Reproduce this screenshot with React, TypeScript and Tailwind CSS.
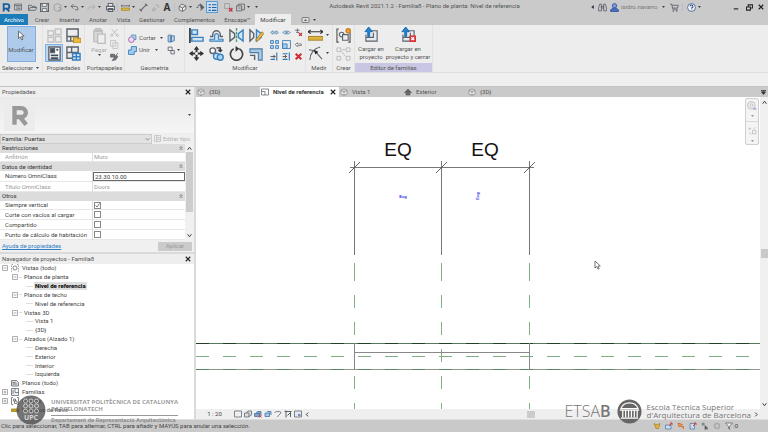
import type { ReactNode } from "react";

type Drawing = { children: ReactNode; className?: string; box?: string };

function Icon({ children, className = "size-2.5", box = "0 0 16 16" }: Drawing) {
  return (
    <svg viewBox={box} className={`shrink-0 ${className}`} fill="none" stroke="#5c636b" strokeWidth="1.5" aria-hidden="true">
      {children}
    </svg>
  );
}

function Caret({ className = "" }: { className?: string }) {
  return (
    <span className={`flex w-[5px] shrink-0 justify-center ${className}`}>
      <svg viewBox="0 0 6 4" className="h-[2px] w-[3px]" aria-hidden="true">
        <path d="M0 0h6L3 4z" fill="#444" />
      </svg>
    </span>
  );
}

function Tool({ label, children, className = "" }: { label: string; children: ReactNode; className?: string }) {
  return (
    <button aria-label={label} className={`flex shrink-0 items-center justify-center ${className}`}>
      {children}
    </button>
  );
}

function Cross({ className = "size-[6px]" }: { className?: string }) {
  return (
    <svg viewBox="0 0 8 8" className={className} stroke="#222" strokeWidth="1.5" aria-hidden="true">
      <path d="M1 1l6 6M7 1L1 7" />
    </svg>
  );
}

/* ---------- Quick access bar ---------- */

const quick = "h-[13px] w-[12px]";
const divider = <span className="mx-px h-[9px] w-px shrink-0 bg-[#c0c0c0]" />;

function QuickAccess() {
  return (
    <div className="flex shrink-0 items-center">
      <Tool label="Revit" className={quick}>
        <Icon className="size-[9px]">
          <path d="M3 15V2h6a4 4 0 0 1 0 8H3M8 10l5 5" stroke="#1c5f9e" strokeWidth="3.4" />
        </Icon>
      </Tool>
      <Tool label="Inicio" className={quick}>
        <Icon className="size-2"><path d="M1 2h14v12H1zM1 5h14M6 5v9M8 8h5M8 11h5" /></Icon>
      </Tool>
      <span className="w-[2px]" />
      <Tool label="Abrir" className={quick}>
        <Icon className="size-[9px]"><path d="M1 13V4h5l1 2h6v2M1 13l3-5h12l-3 5z" /></Icon>
      </Tool>
      <Tool label="Guardar" className={quick}>
        <Icon className="size-[9px]"><path d="M1 1h14v14H1z" strokeWidth="2" /><path d="M4 1h8v5H4zM4 10h8v5H4z" fill="#f3f3f3" /></Icon>
      </Tool>
      <span className="w-px" />
      <Tool label="Sincronizar" className={quick}>
        <Icon className="size-[9px]"><path d="M2 4l6-3 6 3v8l-6 3-6-3zM9 9a3 3 0 1 1 0 4" stroke="#999" /></Icon>
      </Tool>
      <Caret />
      <Tool label="Deshacer" className={quick}>
        <Icon className="size-[9px]"><path d="M6 2L2 6l4 4M2 6h8a4 4 0 0 1 4 4v2H9" /></Icon>
      </Tool>
      <Caret />
      <Tool label="Rehacer" className={quick}>
        <Icon className="size-[9px]"><path d="M10 3l4 4-4 4M14 7H6a4 4 0 0 0-4 5" stroke="#a9a9a9" /></Icon>
      </Tool>
      <Caret />
      <span className="w-[2px]" />
      <Tool label="Imprimir" className={quick}>
        <Icon className="size-[9px]"><path d="M4 6V1h8v5M1 6h14v6H1zM4 10h8v5H4z" fill="#eee" strokeWidth="1.8" /></Icon>
      </Tool>
      {divider}
      <Tool label="Medir" className={quick}>
        <Icon className="size-[9px]"><path d="M1 3v4M15 3v4M1 5h14" /><path d="M1 9h14v4H1z" fill="#e2bd45" stroke="#a8882a" /></Icon>
      </Tool>
      <Caret />
      <span className="w-px" />
      <Tool label="Cota alineada" className={quick}>
        <Icon className="size-[9px]"><path d="M3 13L13 3M1 11l4 4M11 1l4 4" strokeWidth="2" /></Icon>
      </Tool>
      <Tool label="Etiqueta" className={quick}>
        <Icon className="size-[9px]"><path d="M2 14l3-6 4 4zM8 5a3 3 0 1 1 4 4" stroke="#a5a5a5" /></Icon>
      </Tool>
      <Tool label="Texto" className={quick}>
        <span className="font-['Open_Sans',sans-serif] text-[10px] leading-[13px] font-bold text-[#333]">A</span>
      </Tool>
      {divider}
      <Tool label="Vista 3D" className={quick}>
        <Icon className="size-[9px]"><path d="M2 6l5-4 7 3v6l-6 4-6-3zM2 6l6 3 6-4M8 9v6" fill="#eee" /></Icon>
      </Tool>
      <Caret />
      <span className="w-px" />
      <Tool label="Sección" className={quick}>
        <Icon className="size-[9px]"><path d="M3 6l5-4 5 6-5 5M1 8h3" strokeWidth="1.8" /><path d="M8 2l6 6-5 2z" fill="#555" /></Icon>
      </Tool>
      <Tool label="Líneas finas" className="h-[12px] w-[12px] border border-[#5d9bd6] bg-[#c6def3]">
        <Icon className="size-[9px]"><path d="M1 3h4M7 3h8M1 8h4M7 8h8M1 13h4M7 13h8" stroke="#2d5f91" strokeWidth="2" /></Icon>
      </Tool>
      <span className="w-[4px]" />
      <Tool label="Cerrar inactivas" className={quick}>
        <Icon className="size-[9px]"><path d="M1 1h9v9H1z" stroke="#9b9b9b" /><path d="M9 9l6 6M15 9l-6 6" stroke="#c4333a" strokeWidth="2.4" /></Icon>
      </Tool>
      <Tool label="Cambiar ventanas" className={quick}>
        <Icon className="size-[9px]"><path d="M1 5h9v9H1zM4 5V2h11v10h-5M4 9h4" /></Icon>
      </Tool>
      <Caret />
      <span className="w-[3px]" />
      <Caret />
    </div>
  );
}

function TitleBar() {
  return (
    <div className="flex h-[14px] shrink-0 items-center">
      <QuickAccess />
      <div className="min-w-0 flex-1 truncate pb-[2px] text-center text-[#555]">
        Autodesk Revit 2021.1.2 - Familia8 - Plano de planta: Nivel de referencia
      </div>
      <div className="flex w-[178px] shrink-0 items-center">
        <Tool label="Mostrar búsqueda" className="w-[4px]">
          <Icon box="0 0 4 6" className="h-[4px] w-[3px]"><path d="M4 0v6L0 3z" fill="#333" stroke="none" /></Icon>
        </Tool>
        <Tool label="Buscar" className="ml-[2px] h-[13px] w-[12px]">
          <Icon className="size-[9px]"><path d="M1 9l2-7h3v12H1zM10 2h3l2 7v5h-5zM6 6h4v3H6z" /></Icon>
        </Tool>
        <Tool label="Cuenta" className="h-[13px] w-[12px]">
          <Icon className="size-[9px]"><circle cx="8" cy="5" r="4" fill="#7e9ad6" stroke="#3455a4" /><path d="M1 15v-3l5-3h4l5 3v3z" fill="#4b6cb8" stroke="#3455a4" /></Icon>
        </Tool>
        <span className="ml-px w-[40px] text-[#777]">isidro.navarro</span>
        <Caret />
        <Tool label="Tienda" className="ml-[2px] h-[13px] w-[12px]">
          <Icon className="size-[9px]"><path d="M0 2h3l2 9h9M4 4h11l-2 5H5" /><circle cx="6" cy="14" r="1" /><circle cx="12" cy="14" r="1" /></Icon>
        </Tool>
        <span className="mx-[2px] h-[8px] w-px bg-[#bbb]" />
        <Tool label="Ayuda" className="h-[13px] w-[12px]">
          <Icon className="size-[9px]"><circle cx="8" cy="8" r="7" fill="#f2f5fa" stroke="#3f5f92" /><path d="M5.500 6a2.500 2.500 0 1 1 3 2.500V10M8.500 11.500v1.500" stroke="#2c4a86" strokeWidth="1.800" /></Icon>
        </Tool>
        <Caret />
        <span className="flex-1" />
        <Tool label="Minimizar" className="w-[10px]">
          <Icon className="size-[6px]"><path d="M2 13h12" stroke="#222" strokeWidth="3" /></Icon>
        </Tool>
        <Tool label="Restaurar" className="ml-[2px] w-[12px]">
          <Icon className="size-[7px]"><path d="M1 7h9v7H1zM5 6V2h10v7h-4" stroke="#222" strokeWidth="2.400" /></Icon>
        </Tool>
        <Tool label="Cerrar" className="mr-px w-[12px]"><Cross /></Tool>
      </div>
    </div>
  );
}

function RibbonTabs() {
  const tabs = [
    ["Crear", "w-[26px]"],
    ["Insertar", "w-[29px]"],
    ["Anotar", "w-[28px]"],
    ["Vista", "w-[23px]"],
    ["Gestionar", "w-[34px]"],
    ["Complementos", "w-[51px]"],
    ["Enscape™", "w-[35px]"],
  ];
  return (
    <div className="flex h-[11px] shrink-0 items-stretch text-[#555]">
      <button className="mr-px w-[28px] bg-[#1c7cba] text-white">Archivo</button>
      {tabs.map(([name, width]) => (
        <button key={name} className={`shrink-0 ${width}`}>{name}</button>
      ))}
      <button className="w-[36px] shrink-0 bg-[#ededed] text-[#444]">Modificar</button>
      <button aria-label="Minimizar cinta" className="ml-[10px] flex items-center gap-[2px]">
        <Icon box="0 0 16 12" className="h-[6px] w-[9px]"><rect x="1" y="1" width="14" height="10" rx="2" fill="#ddd" /><path d="M5 8h6L8 4z" fill="#555" stroke="none" /></Icon>
        <Caret />
      </button>
    </div>
  );
}

/* ---------- Ribbon ---------- */

function Panel({ title, width, children, accent = false }: { title: ReactNode; width: string; children: ReactNode; accent?: boolean }) {
  return (
    <section className={`flex shrink-0 flex-col border-r border-[#e2e2e2] ${width}`}>
      <div className="flex min-h-0 flex-1 items-center justify-center">{children}</div>
      <div className={`flex h-[9px] items-center justify-center whitespace-nowrap ${accent ? "bg-[#c8c6e2]" : ""}`}>{title}</div>
    </section>
  );
}

const big = "size-[15px]";
const small = "size-[9px]";

function Ribbon() {
  return (
    <div className="flex h-[48px] shrink-0 border-b border-[#dedede] bg-[#ededed] text-[#555]">
      <Panel width="w-[43px]" title={<>Seleccionar <Caret className="ml-[2px]" /></>}>
        <button className="flex h-[36px] w-[29px] flex-col items-center justify-between border border-[#82ade0] bg-[#aecbeb] pt-[3px] pb-[7px]">
          <Icon className="h-[11px] w-[10px]"><path d="M4 1v12l3-3 2 5 2-1-2-5h4z" fill="#fff" stroke="#666" /></Icon>
          <span>Modificar</span>
        </button>
      </Panel>

      <Panel width="w-[42px]" title="Propiedades">
        <div className="grid grid-cols-2 gap-x-px">
          <Tool label="Propiedades de tipo" className="size-[18px]">
            <Icon className={big}><path d="M1 3h6v5H1zM9 1h6v6H9zM1 10h6v5H1zM9 9h6v6H9z" stroke="#c3c3c3" /></Icon>
          </Tool>
          <Tool label="Categoría y parámetros de familia" className="size-[18px]">
            <Icon className={big}><path d="M1 1h12v13H1zM1 9h12M5 9v5" /><path d="M8 10h3l1 1h4v5H8z" fill="#efb93c" stroke="#b98720" strokeWidth="1" /></Icon>
          </Tool>
          <Tool label="Propiedades" className="size-[18px] border border-[#7fb0e2] bg-[#bcd7f2]">
            <Icon className={big}><path d="M2 1h12v14H2z" fill="#fff" /><path d="M4 3h4v4H4z" fill="#33424f" /><path d="M10 4h2M4 10h8M4 13h8" strokeWidth="2" stroke="#3c4f63" /></Icon>
          </Tool>
          <Tool label="Tipos de familia" className="size-[18px]">
            <Icon className={big}><path d="M1 1h12v12H1zM1 7h12M6 1v6" /><path d="M7 8h8v7H7zM7 11.500h8M11 8v7" fill="#d6eafb" stroke="#3a7fc0" /></Icon>
          </Tool>
        </div>
      </Panel>

      <Panel width="w-[40px]" title="Portapapeles">
        <div className="flex w-full pl-[3px]">
          <button className="flex w-[22px] flex-col items-center text-[#aaa]">
            <Icon className="h-[16px] w-[15px]"><path d="M2 2h9v12H2zM4 0h5v3H4z" fill="#d8d8d8" stroke="#bdbdbd" /><path d="M6 6h8v10H6z" fill="#eee" stroke="#bdbdbd" /></Icon>
            <span className="mt-[2px]">Pegar</span>
            <Caret />
          </button>
          <div className="flex flex-col gap-[3px]">
            <Tool label="Cortar al portapapeles"><Icon className={small}><path d="M3 2l9 10M13 2L4 12" stroke="#b8b8b8" /><circle cx="3" cy="13" r="2" stroke="#b8b8b8" /><circle cx="13" cy="13" r="2" stroke="#b8b8b8" /></Icon></Tool>
            <Tool label="Copiar al portapapeles"><Icon className={small}><path d="M1 1h9v10H1zM5 5h9v10H5z" fill="#eee" stroke="#c0c0c0" /></Icon></Tool>
            <Tool label="Igualar propiedades"><Icon className={small}><path d="M1 4h7v5H1zM8 9l6-7M4 15l6-1 4-6-3-2z" fill="#777" /></Icon></Tool>
          </div>
        </div>
      </Panel>

      <Panel width="w-[60px]" title="Geometría">
        <div className="flex w-full flex-col gap-[3px] pl-[3px]">
          <div className="flex h-[9px] items-center">
            <Icon className={small}><path d="M5 2h9v8h-4" fill="#b9dcf6" stroke="#3d83bd" /><circle cx="6" cy="10" r="5" fill="#eedcf4" stroke="#8d58a5" /></Icon>
            <button className="ml-[2px] flex w-[25px] items-center justify-between">Cortar<Caret /></button>
            <Tool label="Remate" className="ml-[3px]"><Icon className={small}><path d="M2 2h6v12H2zM6 4l7-1v9l-7 2z" fill="#b9d8f2" stroke="#46739e" /></Icon></Tool>
          </div>
          <div className="flex h-[9px] items-center">
            <Icon className={small}><path d="M6 1h9v9h-4v5H1V7h5z" fill="#9fcdf0" stroke="#3478b5" /></Icon>
            <button className="ml-[2px] flex w-[20px] items-center justify-between">Unir<Caret /></button>
            <Tool label="División de cara" className="ml-[8px]"><Icon className={small}><path d="M2 2h7v6H2zM7 8h6v6H7z" fill="#eee" /></Icon></Tool>
            <Caret />
          </div>
        </div>
      </Panel>

      <Panel width="w-[121px]" title="Modificar">
        <div className="grid grid-cols-4 gap-x-[3px] gap-y-[1px]">
          <Tool label="Alinear" className="size-[17px]"><Icon className={big}><path d="M1 0v16" stroke="#333" strokeWidth="1.800" /><path d="M3 2h6v5H3zM3 10h12v4H3z" fill="#cfe6f8" stroke="#3c82bf" /></Icon></Tool>
          <Tool label="Desfase" className="size-[17px]"><Icon className={big}><path d="M1 9h3V7a4 4 0 1 1 8 0v2h3" /><path d="M1 14h14v-2h-5V8a2 2 0 1 0-4 0v4H1z" fill="#cfe6f8" stroke="#3c82bf" strokeWidth="1.200" /></Icon></Tool>
          <Tool label="Simetría: eje" className="size-[17px]"><Icon className={big}><path d="M1 2v12l5-4V6z" /><path d="M15 2v12l-5-4V6z" fill="#cfe6f8" stroke="#3c82bf" /><path d="M8 0v16" stroke="#4aa07a" strokeDasharray="3 1" /></Icon></Tool>
          <Tool label="Simetría: dibujar eje" className="size-[17px]"><Icon className={big}><path d="M1 2v12l4-4V6z" /><path d="M8 2v12l5-4V6z" fill="#cfe6f8" stroke="#3c82bf" /><path d="M7 13l7-9 2 2-7 8z" fill="#efbd4e" stroke="#a77f2d" strokeWidth="1" /></Icon></Tool>
          <Tool label="Mover" className="size-[17px]"><Icon className={big}><path d="M8 2v12M2 8h12" stroke="#333" strokeWidth="2" /><path d="M8 0l3 4H5zM8 16l3-4H5zM0 8l4-3v6zM16 8l-4-3v6z" fill="#333" stroke="none" /><circle cx="8" cy="8" r="1.500" fill="#fff" stroke="none" /></Icon></Tool>
          <Tool label="Copiar" className="size-[17px]"><Icon className={big}><circle cx="4" cy="5" r="3" fill="#fff" /><path d="M8 2h4v3M10 4l2 2 2-2" stroke="#333" /><circle cx="8" cy="11" r="3.200" fill="#cfe6f8" stroke="#3c82bf" /><circle cx="12" cy="12" r="3.200" fill="#a8d2f4" stroke="#3c82bf" /></Icon></Tool>
          <Tool label="Rotar" className="size-[17px]"><Icon className={big}><path d="M5 3a6.500 6.500 0 1 0 6 0" stroke="#444" strokeWidth="1.800" /><path d="M7 0v6l4-3z" fill="#333" stroke="none" /></Icon></Tool>
          <Tool label="Recortar en esquina" className="size-[17px]"><Icon className={big}><path d="M1 3h13v12h-4V7H1z" fill="#a9c9e4" stroke="#4d7fa9" strokeWidth="1.200" /><path d="M1 10h5v5" /></Icon></Tool>
        </div>
        <div className="ml-[5px] grid grid-cols-3 gap-[3px]">
          <Tool label="Dividir elemento"><Icon className={small}><path d="M1 8l4-3v2h6V5l4 3-4 3V9H5v2z" stroke="#5c88b0" fill="#d5e6f4" /></Icon></Tool>
          <Tool label="Dividir con separación"><Icon className={small}><path d="M1 8l5-3v6zM15 8l-5-3v6zM8 5v6" stroke="#6a90b4" /></Icon></Tool>
          <Tool label="Desbloquear"><Icon className={small}><path d="M2 4h8M6 1v6M4 8h5" /><path d="M9 9l5 5M14 9l-5 5" stroke="#c93034" strokeWidth="2.400" /></Icon></Tool>
          <Tool label="Matriz"><Icon className={small}><path d="M1 1h5v5H1zM10 1h5v5h-5zM1 10h5v5H1zM10 10h5v5h-5z" fill="#b9dcf6" stroke="#3478b5" /></Icon></Tool>
          <Tool label="Escala"><Icon className={small}><path d="M1 1h14v14H1z" stroke="#3478b5" /><path d="M1 7h8v8H1z" fill="#9fcdf0" stroke="#3478b5" /></Icon></Tool>
          <Tool label="Bloquear"><Icon className={small}><path d="M2 8l4-3v2h7v3H6v2z" stroke="#777" /></Icon></Tool>
          <Tool label="Recortar un elemento"><Icon className={small}><path d="M1 8h8M6 5l3 3-3 3" stroke="#444" /><path d="M12 1v14M1 13h8" stroke="#3478b5" strokeWidth="2" /></Icon></Tool>
          <Tool label="Recortar varios elementos"><Icon className={small}><path d="M1 8h7M5 5l3 3-3 3" stroke="#444" /><path d="M1 3h9M1 13h9M13 1v14" stroke="#3478b5" strokeWidth="2" /></Icon></Tool>
          <Tool label="Borrar"><Icon className={small}><path d="M3 3l10 10M13 3L3 13" stroke="#cf2c33" strokeWidth="3.600" /></Icon></Tool>
        </div>
      </Panel>

      <Panel width="w-[27px]" title="Medir">
        <div className="flex flex-col gap-[3px]">
          <button aria-label="Medir distancia" className="flex items-center gap-[2px]">
            <Icon className={big}><path d="M0 4h16M3 2L0 4l3 2M13 2l3 2-3 2" stroke="#333" strokeWidth="1.200" /><path d="M0 9h16v4H0z" fill="#dfb23e" stroke="#a4812f" strokeWidth="1" /></Icon>
            <Caret />
          </button>
          <button aria-label="Cota" className="flex items-center gap-[2px]">
            <Icon className={big}><path d="M2 15A14 14 0 0 1 13 1M1 4l6 1 8 9" strokeWidth="1.200" /><path d="M6 4l5 2-3 3z" fill="#222" stroke="none" /></Icon>
            <Caret />
          </button>
        </div>
      </Panel>

      <Panel width="w-[22px]" title="Crear">
        <div className="flex flex-col gap-[3px]">
          <Tool label="Crear grupo"><Icon className={big}><path d="M3 1H1v14h2M13 5h2v10h-2" stroke="#555" strokeWidth="1.200" /><circle cx="6" cy="7" r="2.500" strokeWidth="1.200" /><path d="M7 7h6v6H7z" fill="#eee" strokeWidth="1.200" /><circle cx="13" cy="3" r="2.200" fill="#f4a83a" stroke="#cf7d20" /></Icon></Tool>
          <Tool label="Crear similar"><Icon className={big}><path d="M1 2h4v4H1zM11 2h4v4h-4zM1 11h4v4H1zM11 11h4v4h-4zM6 4h4M6 6l4 5" stroke="#bbb" strokeWidth="1" /></Icon></Tool>
        </div>
      </Panel>

      <Panel width="w-[78px]" title="Editor de familias" accent>
        <div className="flex w-full justify-between pr-px pl-[2px] leading-[8px]">
          <button className="flex w-[28px] flex-col items-center whitespace-nowrap">
            <Icon className={big}><path d="M7 4h7v11H2V8M10 6v5H2" fill="#e4eaf0" strokeWidth="1.200" /><path d="M4 10V5H1l4-5 4 5H6v5z" fill="#2582cf" stroke="#196ab0" strokeWidth="1" /></Icon>
            <span className="mt-[3px]">Cargar en<br />proyecto</span>
          </button>
          <button className="flex w-[46px] flex-col items-center whitespace-nowrap">
            <Icon className={big}><path d="M7 4h7v11H2V8M10 6v5H2" fill="#e4eaf0" strokeWidth="1.200" /><path d="M4 10V5H1l4-5 4 5H6v5z" fill="#2582cf" stroke="#196ab0" strokeWidth="1" /><path d="M9 9h7v7H9z" fill="#d8343a" stroke="none" /><path d="M11 11l3 3M14 11l-3 3" stroke="#fff" /></Icon>
            <span className="mt-[3px]">Cargar en<br />proyecto y cerrar</span>
          </button>
        </div>
      </Panel>
    </div>
  );
}

/* ---------- Properties ---------- */

type Row = { kind: "group" | "text" | "input" | "check"; name: string; value?: string; on?: boolean };

const rows: Row[] = [
  { kind: "group", name: "Restricciones" },
  { kind: "text", name: "Anfitrión", value: "Muro" },
  { kind: "group", name: "Datos de identidad" },
  { kind: "input", name: "Número OmniClass", value: "23.30.10.00" },
  { kind: "text", name: "Título OmniClass", value: "Doors" },
  { kind: "group", name: "Otros" },
  { kind: "check", name: "Siempre vertical", on: true },
  { kind: "check", name: "Corte con vacíos al cargar" },
  { kind: "check", name: "Compartido" },
  { kind: "check", name: "Punto de cálculo de habitación" },
];

function PaneTitle({ children }: { children: ReactNode }) {
  return (
    <div className="flex h-[10px] shrink-0 items-center justify-between bg-[#eee] pr-[3px] pl-[2px] text-[#555]">
      <h2>{children}</h2>
      <button aria-label="Cerrar panel"><Cross /></button>
    </div>
  );
}

function Value({ row }: { row: Row }) {
  if (row.kind === "input")
    return <input id={row.name} defaultValue={row.value} className="block h-[9px] w-full border border-[#666] bg-white px-px leading-[7px] outline-none" />;
  if (row.kind === "check")
    return (
      <span className="relative ml-px flex size-[7px]">
        <input id={row.name} type="checkbox" defaultChecked={row.on} className="peer size-[7px] appearance-none border border-[#888] bg-white" />
        <svg viewBox="0 0 7 7" className="pointer-events-none absolute inset-0 hidden size-[7px] peer-checked:block" fill="none" stroke="#555" strokeWidth="0.8" aria-hidden="true">
          <path d="M1.500 3.500L3 5l2.500-3.500" />
        </svg>
      </span>
    );
  return <span className="pl-px">{row.value}</span>;
}

function Properties() {
  return (
    <section className="flex shrink-0 flex-col">
      <PaneTitle>Propiedades</PaneTitle>
      <div className="flex h-[36px] items-center justify-between bg-linear-to-b from-[#eaeaea] to-[#f5f5f5] pr-[2px] pl-[4px]">
        <span className="flex h-[31px] w-[31px] items-center justify-center bg-[#ececec]">
          <Icon className="size-[22px]"><path d="M4 15V3h5a3 3 0 0 1 0 6.500H4M8 9.500l4.500 5.500" stroke="#999" strokeWidth="3.200" /></Icon>
        </span>
        <button aria-label="Selector de tipo"><Caret /></button>
      </div>
      <div className="flex h-[11px] items-center bg-[#efefef]">
        <div className="relative w-[152px]">
          <select aria-label="Familia" className="block h-[10px] w-full appearance-none border border-[#ccc] bg-[#e2e2e2] pl-px text-[#333] outline-none">
            <option>Familia: Puertas</option>
          </select>
          <svg viewBox="0 0 8 8" className="pointer-events-none absolute top-[3px] right-[2px] size-[5px]" fill="none" stroke="#555" aria-hidden="true"><path d="M1 2l3 3 3-3" /></svg>
        </div>
        <button disabled className="ml-[2px] flex flex-1 items-center gap-[2px] whitespace-nowrap text-[#b2b2b2]">
          <Icon className="size-[7px]"><path d="M1 1h14v14H1zM6 1v14M6 6h9M6 10h9" stroke="#b5b5b5" /></Icon>
          Editar tipo
        </button>
      </div>
      <div className="flex h-[96px] bg-white">
        <table className="h-full min-w-0 flex-1 table-fixed border-collapse text-[#444]">
          <colgroup><col className="w-1/2" /><col className="w-1/2" /></colgroup>
          <tbody>
            {rows.map((row) =>
              row.kind === "group" ? (
                <tr key={row.name} className="bg-[#dcdcdc] text-[#333]">
                  <th scope="rowgroup" colSpan={2} className="p-0 pl-[2px] text-left font-normal">
                    <div className="flex items-center justify-between pr-[2px]">
                      {row.name}
                      <svg viewBox="0 0 6 8" className="h-[5px] w-[4px]" fill="none" stroke="#333" aria-hidden="true"><path d="M1 3l2-2 2 2M1 6l2-2 2 2" /></svg>
                    </div>
                  </th>
                </tr>
              ) : (
                <tr key={row.name} className={`border-b border-[#e8e8e8] ${row.kind === "text" ? "text-[#999]" : ""}`}>
                  <th scope="row" className="p-0 pl-[5px] text-left font-normal whitespace-nowrap"><label htmlFor={row.name}>{row.name}</label></th>
                  <td className="border-l border-[#ddd] p-0"><Value row={row} /></td>
                </tr>
              ),
            )}
          </tbody>
        </table>
        <div className="flex w-[9px] flex-col items-center justify-between bg-[#f0f0f0] py-[2px]">
          <Icon box="0 0 8 8" className="size-[5px]"><path d="M1 6l3-4 3 4" stroke="#333" /></Icon>
          <span className="mt-[1px] mb-auto h-[60px] w-[7px] bg-[#cdcdcd]" />
          <Icon box="0 0 8 8" className="size-[5px]"><path d="M1 2l3 4 3-4" stroke="#333" /></Icon>
        </div>
      </div>
      <div className="flex h-[12px] items-center justify-between bg-[#f0f0f0] pr-[2px] pl-[2px]">
        <a href="#ayuda" className="text-[#2f7fc6] underline">Ayuda de propiedades</a>
        <button disabled className="h-[9px] w-[34px] bg-[#cbcbcb] text-[#9a9a9a]">Aplicar</button>
      </div>
    </section>
  );
}

/* ---------- Project browser ---------- */

type Node = { depth: 0 | 1 | 2; name: string; toggle?: "-" | "+"; icon?: "views" | "sheet" | "family" | "group" | "link"; current?: boolean };

const tree: Node[] = [
  { depth: 0, name: "Vistas (todo)", toggle: "-", icon: "views" },
  { depth: 1, name: "Planos de planta", toggle: "-" },
  { depth: 2, name: "Nivel de referencia", current: true },
  { depth: 1, name: "Planos de techo", toggle: "-" },
  { depth: 2, name: "Nivel de referencia" },
  { depth: 1, name: "Vistas 3D", toggle: "-" },
  { depth: 2, name: "Vista 1" },
  { depth: 2, name: "{3D}" },
  { depth: 1, name: "Alzados (Alzado 1)", toggle: "-" },
  { depth: 2, name: "Derecha" },
  { depth: 2, name: "Exterior" },
  { depth: 2, name: "Interior" },
  { depth: 2, name: "Izquierda" },
  { depth: 0, name: "Planos (todo)", icon: "sheet" },
  { depth: 0, name: "Familias", toggle: "+", icon: "family" },
  { depth: 0, name: "Grupos", toggle: "+", icon: "group" },
  { depth: 0, name: "Vínculos de Revit", icon: "link" },
];

const indent = ["pl-[2px]", "pl-[12px]", "pl-[26px]"];

const nodeIcons = {
  views: <><path d="M4 1H1v14h3M12 1h3v14h-3" stroke="#888" strokeDasharray="3 2" /><circle cx="8" cy="8" r="4" /></>,
  sheet: <path d="M1 3h10l4 4v7H1zM3 7h6M3 10h9" fill="#ddd" />,
  family: <path d="M1 1h14v14H1zM8 1v8h7M4 4v8" fill="#eee" />,
  group: <path d="M4 1H1v14h3M12 1h3v14h-3M5 4h4v4H5zM7 8h5v5H7z" />,
  link: <path d="M1 6h14v5H1z" fill="#c9a227" stroke="#9a7a14" />,
};

function Browser() {
  return (
    <section className="flex min-h-0 flex-1 flex-col border-t-2 border-[#dadada]">
      <PaneTitle>Navegador de proyectos - Familia8</PaneTitle>
      <ul className="flex h-[150px] flex-col bg-white text-[#444]">
        {tree.map((node, i) => (
          <li key={i} className={`flex min-h-0 flex-1 items-center ${indent[node.depth]}`}>
            {node.depth < 2 && (
              <svg viewBox="0 0 6 6" className="size-[6px] shrink-0" fill="none" stroke="#999" strokeWidth="0.8" aria-hidden="true">
                {node.toggle && <path d={node.toggle === "+" ? "M.5.5h5v5h-5zM1.500 3h3M3 1.500v3" : "M.5.5h5v5h-5zM1.500 3h3"} />}
              </svg>
            )}
            {node.icon ? (
              <Icon className="mr-px ml-[3px] size-2">{nodeIcons[node.icon]}</Icon>
            ) : (
              <span className={`h-px shrink-0 bg-[#ddd] ${node.depth === 2 ? "w-[7px]" : "ml-px w-[3px]"}`} />
            )}
            <button className={`ml-px px-px whitespace-nowrap ${node.current ? "bg-[#dedede] font-bold text-black" : ""}`}>{node.name}</button>
          </li>
        ))}
      </ul>
      <div className="flex-1 bg-white" />
    </section>
  );
}

/* ---------- Drawing area ---------- */

function ViewTabs() {
  const plan = <path d="M1 2h14v12H1zM1 7h7v7" fill="#fff" />;
  const cube = <path d="M2 5l6-3 6 3v7l-6 3-6-3zM2 5l6 3 6-3M8 8v7" fill="#eee" stroke="#777" strokeWidth="1.200" />;
  const house = <path d="M1 9l7-7 7 7h-3v5H4V9z" fill="#666" />;
  const views = [
    { name: "{3D}", icon: cube },
    { name: "Nivel de referencia", icon: plan, current: true },
    { name: "Vista 1", icon: cube },
    { name: "Exterior", icon: house },
    { name: "{3D}", icon: cube },
  ];
  return (
    <div className="flex h-[10px] shrink-0 items-center bg-[#cacaca] text-[#555]">
      {views.map((view, i) => (
        <button key={i} className={`flex h-full shrink-0 items-center gap-[4px] pl-px whitespace-nowrap ${view.current ? "w-[79px] bg-white font-bold text-[#333]" : "w-[64px]"}`}>
          <Icon className="size-2">{view.icon}</Icon>
          {view.name}
          {view.current && <Cross className="mr-[3px] ml-auto size-[6px]" />}
        </button>
      ))}
      <button aria-label="Lista de vistas" className="mr-[2px] ml-auto">
        <Icon box="0 0 8 8" className="size-[5px]"><path d="M0 1h8M1 3h6L4 7z" fill="#333" stroke="#333" /></Icon>
      </button>
    </div>
  );
}

function Canvas() {
  const axes = [158, 245, 333];
  return (
    <svg className="min-w-0 flex-1 self-stretch bg-white" fill="none" role="img" aria-label="Plano de planta: Nivel de referencia">
      <g stroke="#777" shapeRendering="crispEdges">
        <path d="M154 70.500h184" />
        {axes.map((x) => <path key={x} d={`M${x + 0.5} 64V158`} />)}
      </g>
      <g stroke="#555" strokeWidth="0.9">
        {axes.map((x) => <path key={x} d={`M${x - 5} 76L${x + 6} 65`} />)}
      </g>
      <g stroke="#7fb082" shapeRendering="crispEdges">
        {axes.map((x) => <path key={x} d={`M${x + 0.5} 166v18m0 14v13m0 14v13m0 41v13m0 14v7`} />)}
        <path d="M245.500 252v13" />
        <line x1="0" x2="100%" y1="246.500" y2="246.500" stroke="#55795a" />
        <line x1="0" x2="100%" y1="246.500" y2="246.500" stroke="#263d29" strokeDasharray="13 14" />
        <line x1="0" x2="100%" y1="272.500" y2="272.500" stroke="#8c9a8d" />
        <line x1="0" x2="100%" y1="272.500" y2="272.500" stroke="#5b8660" strokeDasharray="13 14" />
        <line x1="0" x2="100%" y1="259.500" y2="259.500" strokeDasharray="13 14" />
      </g>
      <g stroke="#888" shapeRendering="crispEdges">
        <path d="M158.500 246v27M333.500 246v27M158 255.500h176" />
      </g>
      <g fill="#111" textAnchor="middle" className="font-['Liberation_Sans',Arial,sans-serif] text-[19px]">
        <text x="202" y="59">EQ</text>
        <text x="289" y="59">EQ</text>
      </g>
      <g fill="#2a2ae6" textAnchor="middle" className="font-['Liberation_Sans',Arial,sans-serif] text-[4px] font-bold">
        <text x="207" y="101">Ecg</text>
        <text x="0" y="0" transform="translate(283 99) rotate(-90)">Ecg</text>
      </g>
      <path d="M399 164v7l1.800-1.500 1.200 2.700 1.200-.5-1.200-2.700h2.300z" fill="#fff" stroke="#555" strokeWidth="0.8" />
    </svg>
  );
}

function DrawingArea() {
  return (
    <main className="flex min-w-0 flex-1 flex-col">
      <ViewTabs />
      <div className="relative flex min-h-0 flex-1">
        <Canvas />
        <div className="flex w-[8px] shrink-0 flex-col items-center bg-[#f0f0f0] pt-[3px] pb-[2px]">
          <Icon box="0 0 8 8" className="size-[5px]"><path d="M1 6l3-4 3 4" stroke="#333" /></Icon>
          <span className="h-[144px]" />
          <span className="h-[9px] w-[7px] bg-[#c9c9c9]" />
          <Icon box="0 0 8 8" className="mt-auto size-[5px]"><path d="M1 2l3 4 3-4" stroke="#333" /></Icon>
        </div>
        <div className="absolute top-[1px] right-[9px] flex h-[47px] w-[14px] flex-col items-center justify-around rounded-xs border border-[#cfcfcf] bg-[#f4f4f4]">
          <Tool label="Rueda de navegación"><Icon className="size-[10px]"><circle cx="7" cy="7" r="6" stroke="#bbb" /><circle cx="7" cy="7" r="2.500" stroke="#bbb" /><path d="M10 11h5v3h-5z" fill="#a9b3dd" stroke="none" /></Icon></Tool>
          <Caret className="opacity-50" />
          <span className="h-px w-full bg-[#d9d9d9]" />
          <Tool label="Zoom"><Icon className="size-[9px]"><path d="M1 3h4M3 1v4M8 6h6v6H8zM10 3l3-2M2 10l4 3" stroke="#bbb" /></Icon></Tool>
          <Caret className="opacity-50" />
        </div>
      </div>
      <div className="flex h-[10px] shrink-0 items-center bg-[#efefef] text-[#444]">
        <button className="w-[37px] text-center">1 : 20</button>
        <Tool label="Nivel de detalle" className="w-[10px]"><Icon className="size-2"><path d="M1 2h14v12H1z" /></Icon></Tool>
        <Tool label="Estilo visual" className="w-[10px]"><Icon className="size-2"><path d="M1 6h9v8H1zM5 6l3-4h7v8l-5 3" fill="#ddd" /></Icon></Tool>
        <Tool label="Camino de sol" className="w-[10px]"><Icon className="size-2"><path d="M1 7h10v6H1zM4 7l3-4h7v7" fill="#7ba7cf" stroke="#456f99" /><path d="M10 10l5 5M15 10l-5 5" stroke="#c9353a" strokeWidth="2" /></Icon></Tool>
        <Tool label="Recortar vista" className="w-[10px]"><Icon className="size-2"><path d="M2 6h9v7H2zM6 3h8v7" fill="#a6c9e8" stroke="#3e6f9e" /></Icon></Tool>
        <Tool label="Ocultar temporalmente" className="w-[10px]"><Icon className="size-2"><path d="M1 5c4-3 10-3 13 0-2 5-6 5-7 9" /></Icon></Tool>
        <Tool label="Restricciones" className="w-[10px]"><Icon className="size-2"><path d="M1 3h14M4 1v14M13 4v10M7 11l6-6" strokeWidth="2" /></Icon></Tool>
        <Tool label="Vista preliminar" className="w-[10px]"><Icon className="size-2"><path d="M1 2h14v12H1z" fill="#e5e9f1" /><path d="M8 8h5v4H8z" fill="#7788b5" stroke="none" /></Icon></Tool>
        <Tool label="Desplazar a la izquierda" className="w-[8px]"><Icon box="0 0 8 8" className="size-[5px]"><path d="M5 1L2 4l3 3" stroke="#333" /></Icon></Tool>
        <span className="ml-[216px] h-[7px] w-[8px] bg-[#cbcbcb]" />
        <Icon box="0 0 8 8" className="mr-[9px] ml-auto size-[5px]"><path d="M2 1l3 3-3 3" stroke="#333" /></Icon>
      </div>
    </main>
  );
}

/* ---------- Bottom ---------- */

function StatusBar() {
  return (
    <footer className="flex h-[13px] shrink-0 items-center border-t border-[#ddd] bg-[#c9c9c9] pl-px text-[#444]">
      <p className="whitespace-nowrap">Clic para seleccionar, TAB para alternar, CTRL para añadir y MAYÚS para anular una selección.</p>
      <div className="mr-[30px] ml-auto flex items-center gap-[4px]">
        <Tool label="Subproyectos"><Icon className="size-2"><path d="M2 3l6 3 6-3-3 10H6z" fill="#e8b63d" stroke="#a98225" /></Icon></Tool>
        <Tool label="Seleccionar vínculos"><Icon className="size-2"><path d="M1 6h11v8H1z" fill="#c9ddf1" stroke="#4b7aa8" /><path d="M8 8l6-6M10 2h4v4" stroke="#d23c3c" strokeWidth="2" /></Icon></Tool>
        <Tool label="Seleccionar subyacentes"><Icon className="size-2"><path d="M2 2l9 3-7 5zM7 9h6v5" fill="#eaa14f" stroke="#c96232" /></Icon></Tool>
        <Tool label="Seleccionar bloqueados"><Icon className="size-2"><path d="M2 3h9v11H2z" fill="#c9ddf1" stroke="#4b7aa8" /><path d="M8 8l6-6M10 2h4v4" stroke="#d23c3c" strokeWidth="2" /></Icon></Tool>
        <Tool label="Seleccionar por cara"><Icon className="size-2"><path d="M1 4h7M4 1v7M8 7v8l2-2 2 2 1-1-2-2h2z" fill="#555" /></Icon></Tool>
        <Tool label="Procesos en segundo plano"><Icon className="size-2"><circle cx="8" cy="8" r="5" stroke="#aaa" strokeWidth="3" /></Icon></Tool>
        <button aria-label="Filtro" className="flex items-center"><Icon className="size-2"><path d="M1 2h14L9 9v6l-2-2V9z" fill="#eee" /></Icon>:0</button>
      </div>
    </footer>
  );
}

function Watermarks() {
  return (
    <div className="pointer-events-none absolute inset-x-0 bottom-0 flex h-[38px] items-start justify-between pl-[16px] font-['Open_Sans',sans-serif]">
      <div className="flex items-start gap-[5px] font-bold text-[#777]/75">
        <svg viewBox="0 0 30 30" className="mt-px size-[30px] shrink-0" aria-hidden="true">
          <circle cx="15" cy="15" r="14.500" fill="#444" fillOpacity="0.75" />
          <g fill="none" stroke="#d4d4d4" strokeWidth="0.9">
            {[6, 11, 16].map((y) => [9.5, 15, 20.5].map((x) => <circle key={`${x}-${y}`} cx={x} cy={y} r="2" />))}
          </g>
          <text x="15" y="25" textAnchor="middle" fill="#d4d4d4" className="text-[7px] font-bold">UPC</text>
        </svg>
        <div className="flex flex-col pt-[5px] leading-[7px] whitespace-nowrap">
          <span>UNIVERSITAT POLITÈCNICA DE CATALUNYA</span>
          <span>BARCELONATECH</span>
          <span className="mt-[2px] border-t border-[#999] font-['Roboto',sans-serif]">Departament de Representació Arquitectònica</span>
        </div>
      </div>
      <div className="mr-[17px] flex items-center pt-[3px] text-[#777]">
        <span className="text-[16px] leading-[28px] font-light">ETSA<span className="font-semibold">B</span></span>
        <svg viewBox="0 0 26 26" className="ml-[6px] size-[25px]" aria-hidden="true">
          <circle cx="13" cy="13" r="12.500" fill="#666" />
          <path d="M4 10c2-5 5-6 9-6s7 1 9 6z" fill="none" stroke="#fff" strokeWidth="1.200" />
          <path d="M3 11.500h20M6 12v7M9 12v7M12 12v7M15 12v7M18 12v7M21 12v7M4 20h18" stroke="#fff" strokeWidth="1.300" />
        </svg>
        <div className="ml-[5px] text-[8px] leading-[8px] font-medium whitespace-nowrap">
          <p>Escola Tècnica Superior</p>
          <p>d'Arquitectura de Barcelona</p>
        </div>
      </div>
    </div>
  );
}

export default function App() {
  return (
    <div className="relative flex h-screen flex-col overflow-hidden bg-[#ededed] font-['Roboto','Open_Sans',sans-serif] text-[6px] leading-[8px]">
      <header className="flex shrink-0 flex-col bg-[#cacaca]">
        <TitleBar />
        <RibbonTabs />
        <Ribbon />
      </header>
      <div className="h-[14px] shrink-0 border-b border-[#c4c4c4] bg-[#efefef]" />
      <div className="flex min-h-0 flex-1">
        <aside className="flex w-[196px] shrink-0 flex-col border-r-2 border-[#dadada]">
          <Properties />
          <Browser />
        </aside>
        <DrawingArea />
      </div>
      <StatusBar />
      <Watermarks />
    </div>
  );
}
